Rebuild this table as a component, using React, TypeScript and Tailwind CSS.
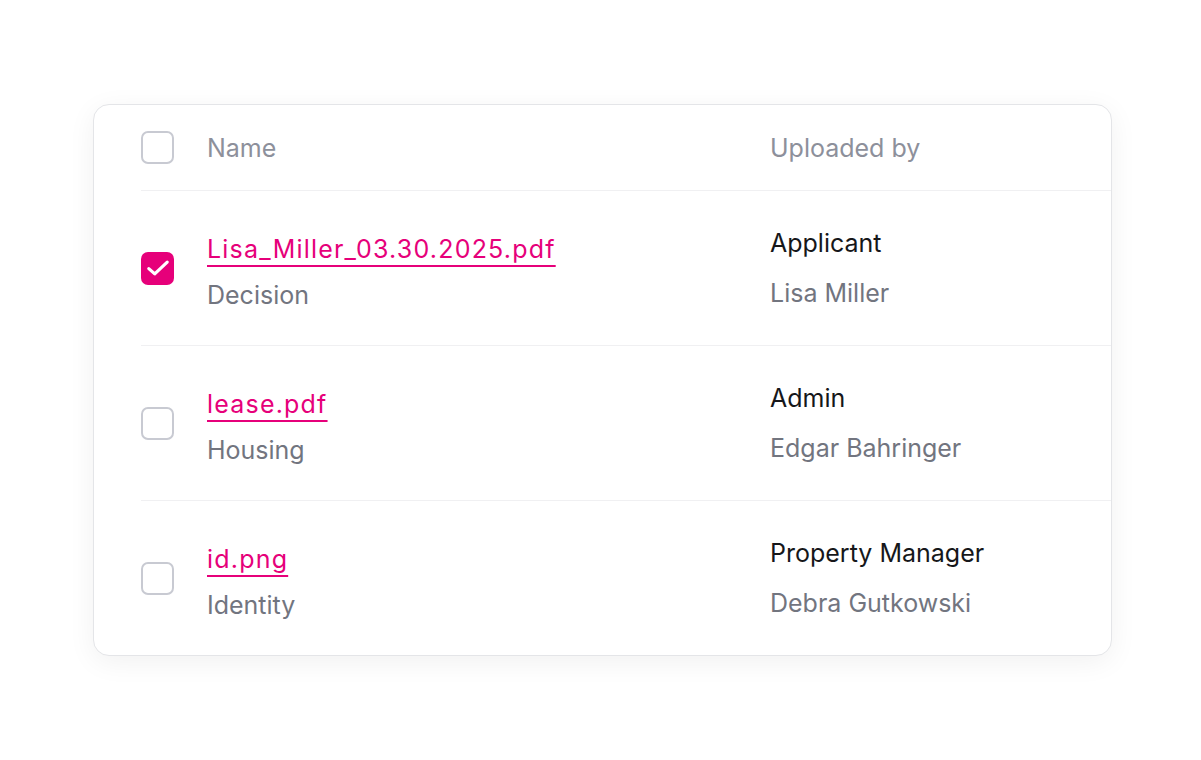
const rows = [
  { file: "Lisa_Miller_03.30.2025.pdf", category: "Decision", role: "Applicant", person: "Lisa Miller", checked: true },
  { file: "lease.pdf", category: "Housing", role: "Admin", person: "Edgar Bahringer", checked: false },
  { file: "id.png", category: "Identity", role: "Property Manager", person: "Debra Gutkowski", checked: false },
];

function Checkbox({ checked }: { checked: boolean }) {
  if (checked) {
    return (
      <div className="flex h-[33px] w-[33px] shrink-0 items-center justify-center rounded-[7px] bg-[#e6007a]">
        <svg width="26" height="26" viewBox="0 0 24 24" fill="none" stroke="white" strokeWidth="2.9" strokeLinecap="round" strokeLinejoin="round">
          <path d="M3.5 12.5l5.5 5L20.5 6.5" />
        </svg>
      </div>
    );
  }
  return <div className="h-[33px] w-[33px] shrink-0 rounded-[7px] border-2 border-[#c8cad2] bg-white" />;
}

export default function App() {
  return (
    <div className="min-h-[760px] bg-white pt-[104px] pl-[93px]" style={{ fontFamily: "Inter, 'Noto Sans', sans-serif" }}>
      <div className="h-[552px] w-[1019px] overflow-hidden rounded-[16px] border border-[#e4e5e8] bg-white pl-[47px] shadow-[0_6px_28px_rgba(0,0,0,0.06)]">
        <div className="flex h-[86px] items-center border-b border-[#f0f0f2] text-[25px] text-[#8d909b]">
          <Checkbox checked={false} />
          <div className="ml-[33px] w-[563px] pt-[2px]">Name</div>
          <div className="pt-[2px]">Uploaded by</div>
        </div>
        {rows.map((r) => (
          <div key={r.file} className="flex h-[155px] items-center border-b border-[#f0f0f2] text-[25px]">
            <Checkbox checked={r.checked} />
            <div className="ml-[33px] w-[563px] pt-[8px] leading-[46px]">
              <div>
                <span className="tracking-[1.2px] text-[#e6007a] underline decoration-[2px] underline-offset-[7px]">{r.file}</span>
              </div>
              <div className="text-[#72757f]">{r.category}</div>
            </div>
            <div className="flex flex-col gap-[2px] leading-[48px]">
              <div className="text-[#16171a]">{r.role}</div>
              <div className="text-[#72757f]">{r.person}</div>
            </div>
          </div>
        ))}
      </div>
    </div>
  );
}
